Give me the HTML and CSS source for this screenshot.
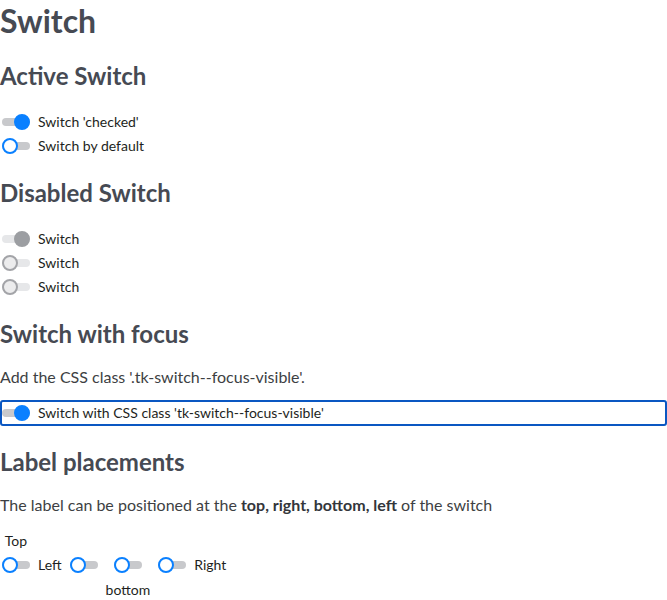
FILE: index.html
```html
<!DOCTYPE html>
<html>
<head>
<meta charset="utf-8">
<link rel="stylesheet" href="styles.css">
</head>
<body>
<h1 class="title">Switch</h1>

<h2 class="section">Active Switch</h2>
<div class="list">
  <label class="tk-switch"><span class="track is-on"><span class="thumb"></span></span><span class="text">Switch 'checked'</span></label>
  <label class="tk-switch"><span class="track"><span class="thumb"></span></span><span class="text">Switch by default</span></label>
</div>

<h2 class="section">Disabled Switch</h2>
<div class="list">
  <label class="tk-switch is-disabled"><span class="track is-on"><span class="thumb"></span></span><span class="text">Switch</span></label>
  <label class="tk-switch is-disabled"><span class="track"><span class="thumb"></span></span><span class="text">Switch</span></label>
  <label class="tk-switch is-disabled"><span class="track"><span class="thumb"></span></span><span class="text">Switch</span></label>
</div>

<h2 class="section">Switch with focus</h2>
<p class="desc">Add the CSS class '.tk-switch--focus-visible'.</p>
<div class="list focus-list">
  <label class="tk-switch tk-switch--focus-visible"><span class="track is-on"><span class="thumb"></span></span><span class="text">Switch with CSS class 'tk-switch--focus-visible'</span></label>
</div>

<h2 class="section">Label placements</h2>
<p class="desc">The label can be positioned at the <b>top, right, bottom, left</b> of the switch</p>
<div class="placements">
  <label class="tk-switch place-top"><span class="text">Top</span><span class="track"><span class="thumb"></span></span></label>
  <label class="tk-switch place-left"><span class="text">Left</span><span class="track"><span class="thumb"></span></span></label>
  <label class="tk-switch place-bottom"><span class="track"><span class="thumb"></span></span><span class="text">bottom</span></label>
  <label class="tk-switch place-right"><span class="track"><span class="thumb"></span></span><span class="text">Right</span></label>
</div>
</body>
</html>
```

FILE: styles.css
```css
body {
  margin: 0;
  font-family: Lato, "Noto Sans", sans-serif;
  color: #1e1f22;
  background: #fff;
}

.title {
  margin: 0;
  font-size: 32px;
  line-height: 41px;
  font-weight: 700;
  color: #464a53;
}

.section {
  margin: 20px 0 19px;
  font-size: 24px;
  line-height: 30px;
  font-weight: 700;
  color: #464a53;
}

.desc {
  margin: 18px 0 0;
  font-size: 16px;
  line-height: 20px;
  color: #3d3f43;
}

.section + .desc {
  margin-top: -1px;
}

.desc b {
  color: #33363b;
}

.list {
  display: flex;
  flex-direction: column;
}

.focus-list {
  margin-top: 13px;
  padding-bottom: 1px;
}

.tk-switch {
  display: flex;
  align-items: center;
  gap: 8px;
  border: 2px solid transparent;
  border-radius: 3px;
  min-height: 20px;
  font-size: 14px;
  line-height: 20px;
}

.tk-switch--focus-visible {
  border-color: #0a57c2;
  padding: 1px 0;
}

.track {
  position: relative;
  flex: none;
  width: 28px;
  height: 16px;
}

.track::before {
  content: "";
  position: absolute;
  left: 0;
  right: 0;
  top: 4px;
  height: 8px;
  border-radius: 4px;
  background: #c8c9cc;
}

.thumb {
  position: absolute;
  top: 0;
  left: 0;
  width: 16px;
  height: 16px;
  box-sizing: border-box;
  border-radius: 50%;
  background: #fff;
  border: 2px solid #0a80ff;
}

.track.is-on .thumb {
  left: auto;
  right: 0;
  background: #0a80ff;
}

.is-disabled .track::before {
  background: #e6e7e9;
}

.is-disabled .thumb {
  background: #ececed;
  border-color: #a3a4a8;
}

.is-disabled .track.is-on .thumb {
  background: #9c9ea2;
  border-color: #9c9ea2;
}

.placements {
  margin-top: 14px;
  display: flex;
  align-items: flex-start;
  gap: 4px;
}

.place-top,
.place-bottom {
  flex-direction: column;
  gap: 4px;
}

.place-bottom {
  gap: 5px;
}

.place-left,
.place-right,
.place-bottom {
  margin-top: 24px;
}

.place-top .track,
.place-bottom .track {
  margin: 2px 0;
}
```
